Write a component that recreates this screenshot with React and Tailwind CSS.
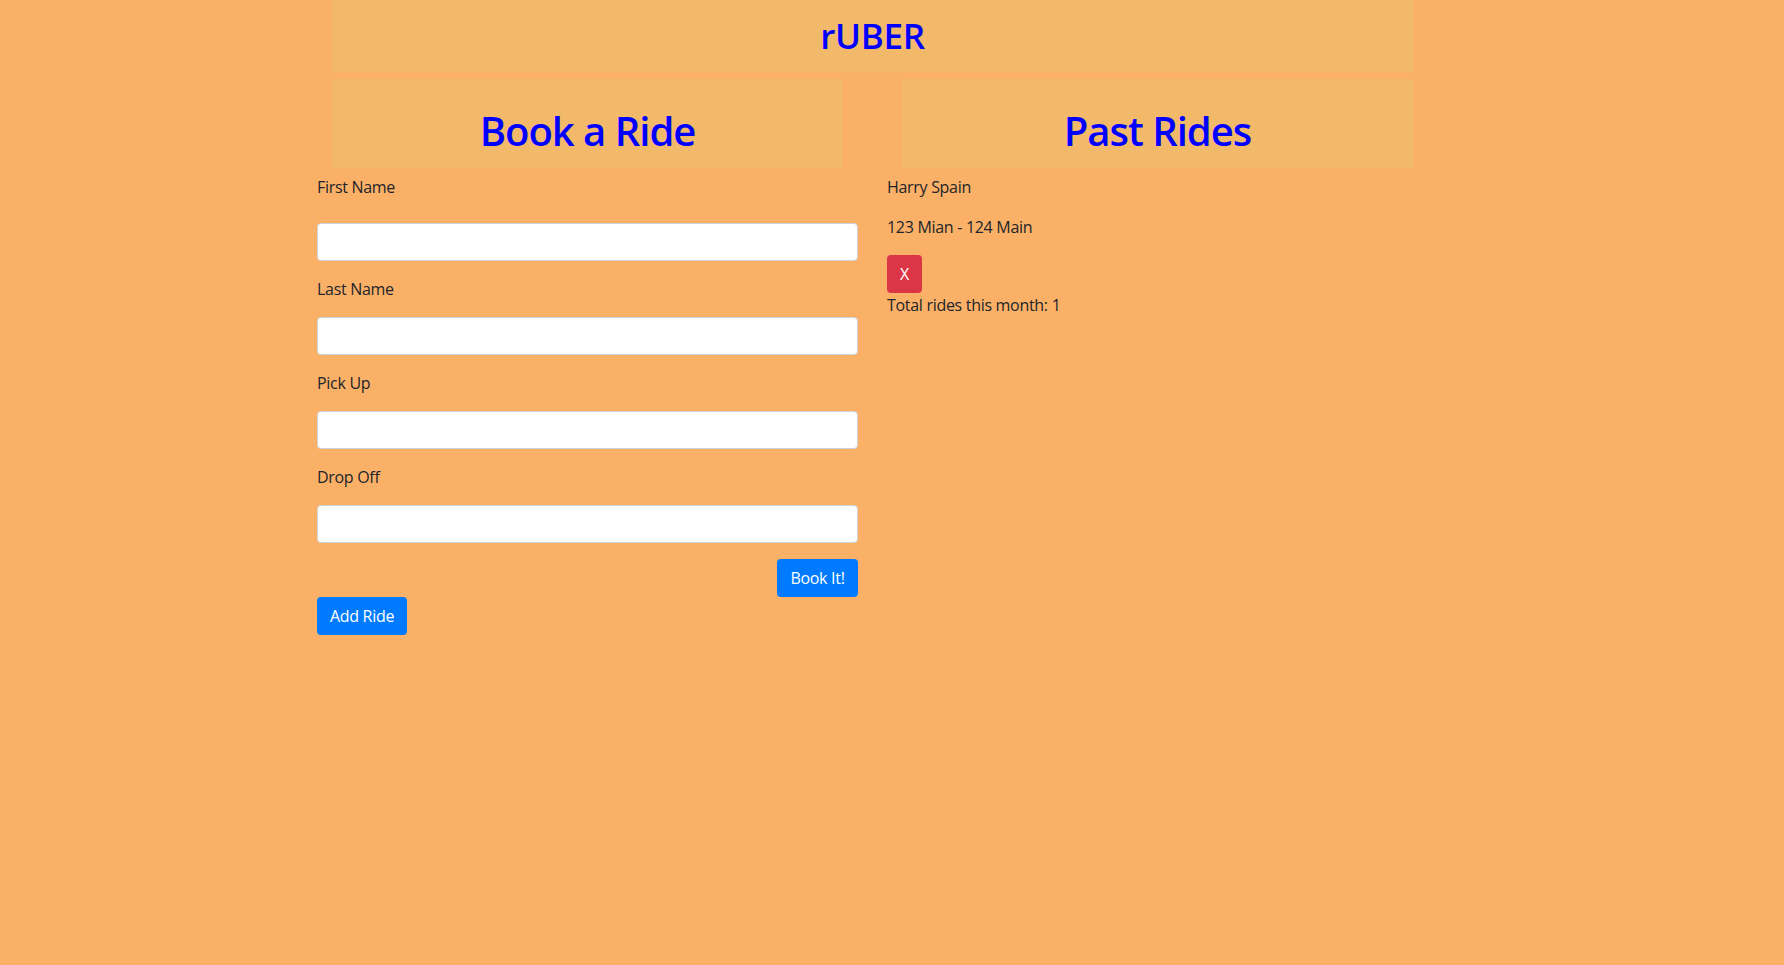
import React, { useState } from "react";

const fields = ["First Name", "Last Name", "Pick Up", "Drop Off"];

const App = () => {
  const [values, setValues] = useState({});
  const [rides, setRides] = useState([
    { name: "Harry Spain", pickUp: "123 Mian", dropOff: "124 Main" },
  ]);

  const handleChange = (field, value) => {
    setValues({ ...values, [field]: value });
  };

  const handleRemove = (index) => {
    setRides(rides.filter((_, i) => i !== index));
  };

  return (
    <div
      className="min-h-screen bg-[#fbb068] text-[#212529] text-[16px] leading-[24px]"
      style={{ fontFamily: '"Open Sans", "Noto Sans", sans-serif' }}
    >
      <div className="w-[1111px] ml-[317px]">
        {/* Title bar */}
        <div className="mx-[15px] h-[72px] bg-[#f2b96b] flex items-center justify-center">
          <h2 className="text-[35px] leading-[38px] font-semibold text-[#0000ff] tracking-[-0.3px]">rUBER</h2>
        </div>

        <div className="grid grid-cols-2 gap-[29px] mt-[7px]">
          {/* Left column - booking form */}
          <div>
            <div className="mx-[15px] h-[89px] pt-[28px] bg-[#f2b96b] text-center">
              <h1 className="text-[40px] leading-[48px] font-semibold text-[#0000ff] tracking-[-1px]">Book a Ride</h1>
            </div>

            {fields.map((field, i) => (
              <div key={field}>
                <label className={`block h-[24px] tracking-[-0.3px] ${i === 0 ? "mt-[7px]" : "mt-[16px]"}`}>
                  {field}
                </label>
                <input
                  type="text"
                  value={values[field] || ""}
                  onChange={(e) => handleChange(field, e.target.value)}
                  className={`block w-full h-[38px] px-3 bg-white border border-[#ced4da] rounded-[4px] outline-none ${
                    i === 0 ? "mt-[24px]" : "mt-[16px]"
                  }`}
                />
              </div>
            ))}

            <div className="flex justify-end mt-[16px]">
              <button className="w-[81px] h-[38px] bg-[#007bff] text-white rounded-[4px] tracking-[-0.3px]">
                Book It!
              </button>
            </div>
            <button className="w-[90px] h-[38px] bg-[#007bff] text-white rounded-[4px] tracking-[-0.3px]">
              Add Ride
            </button>
          </div>

          {/* Right column - past rides */}
          <div>
            <div className="mx-[15px] h-[89px] pt-[28px] bg-[#f2b96b] text-center">
              <h1 className="text-[40px] leading-[48px] font-semibold text-[#0000ff] tracking-[-1px]">Past Rides</h1>
            </div>

            <div className="mt-[7px]">
              {rides.map((ride, index) => (
                <div key={index}>
                  <p className="mb-[16px] tracking-[-0.3px]">{ride.name}</p>
                  <p className="mb-[16px] tracking-[-0.3px]">
                    {ride.pickUp} - {ride.dropOff}
                  </p>
                  <button
                    onClick={() => handleRemove(index)}
                    className="block w-[35px] h-[38px] bg-[#dc3545] text-white rounded-[4px]"
                  >
                    X
                  </button>
                </div>
              ))}
              <p className="tracking-[-0.3px]">Total rides this month: {rides.length}</p>
            </div>
          </div>
        </div>
      </div>
    </div>
  );
};

export default App;
